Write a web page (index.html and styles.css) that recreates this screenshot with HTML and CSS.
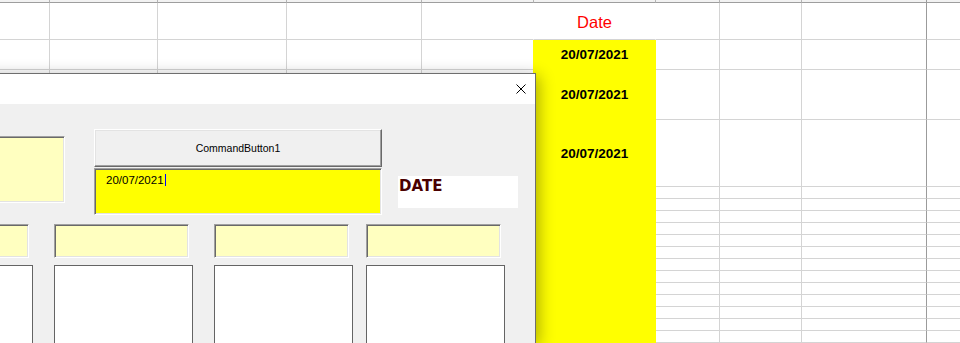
FILE: index.html
```html
<!DOCTYPE html>
<html lang="en">
<head>
    <meta charset="UTF-8">
    <meta name="viewport" content="width=device-width, initial-scale=1.0">
    <title>UserForm</title>
    <link rel="stylesheet" href="styles.css">
</head>
<body>

<!-- Worksheet behind the form -->
<div class="sheet" id="sheet"></div>

<!-- UserForm window -->
<div class="dialog">
    <div class="title-bar">
        <span class="close-btn">
            <svg width="10" height="10" viewBox="0 0 10 10">
                <path d="M0.5 0.5 L9.5 9.5 M9.5 0.5 L0.5 9.5" stroke="#000" stroke-width="1" fill="none"/>
            </svg>
        </span>
    </div>

    <div class="form-body">
        <div class="top-row">
            <div class="field field-tall"></div>
            <div class="button-stack">
                <button type="button" class="command-btn">CommandButton1</button>
                <div class="date-input">20/07/2021<span class="caret"></span></div>
            </div>
            <div class="date-label">DATE</div>
        </div>

        <div class="list-row">
            <div class="list-col">
                <div class="field"></div>
                <div class="list-box"></div>
            </div>
            <div class="list-col">
                <div class="field"></div>
                <div class="list-box"></div>
            </div>
            <div class="list-col">
                <div class="field"></div>
                <div class="list-box"></div>
            </div>
            <div class="list-col">
                <div class="field"></div>
                <div class="list-box"></div>
            </div>
        </div>
    </div>
</div>

<script>
    var rowHeights = [3, 37, 30, 50, 67];
    for (var i = 0; i < 13; i++) {
        rowHeights.push(12);
    }

    var sheet = document.getElementById('sheet');

    rowHeights.forEach(function(h, r) {
        var row = document.createElement('div');
        row.className = r === 0 ? 'row header-row' : 'row';
        row.style.height = h + 'px';

        for (var c = 0; c < 10; c++) {
            var cell = document.createElement('div');
            cell.className = 'cell';

            if (r === 1 && (c === 4 || c === 5)) {
                cell.className += ' no-right';
            }
            if (r === 1 && c === 5) {
                cell.className += ' date-head';
                cell.textContent = 'Date';
            }
            if (r > 1 && c === 5) {
                cell.className += ' yellow';
            }
            if (r >= 2 && r <= 4 && c === 5) {
                cell.textContent = '20/07/2021';
            }
            row.appendChild(cell);
        }
        sheet.appendChild(row);
    });
</script>
</body>
</html>
```

FILE: styles.css
```css
* {
    margin: 0;
    padding: 0;
    box-sizing: border-box;
}

body {
    position: relative;
    width: 960px;
    height: 343px;
    overflow: hidden;
    background-color: #fff;
    font-family: "Liberation Sans", Arial, sans-serif;
}

/* Worksheet grid */
.row {
    display: grid;
    grid-template-columns: 50px 108px 129px 135px 112px 122px 64px 82px 125px 33px;
}

.cell {
    display: flex;
    align-items: center;
    justify-content: center;
    overflow: hidden;
    border-right: 1px solid #d4d4d4;
    border-bottom: 1px solid #d4d4d4;
    font-size: 13.5px;
    font-weight: bold;
    color: #000;
}

.header-row .cell {
    background-color: #f2f2f2;
    border-bottom-color: #9e9e9e;
    border-right-color: #b4b4b4;
}

.cell:nth-child(9) {
    border-right-color: #9b9b9b;
}

.cell:last-child {
    border-right: none;
}

.cell.no-right {
    border-right-color: #fff;
}

.date-head {
    padding-top: 2px;
    font-size: 16.5px;
    font-weight: normal;
    color: #ff0000;
}

.yellow {
    background-color: #ffff00;
    border-color: #ffff00;
    box-shadow: -1px 0 0 #ffff00;
}

/* UserForm */
.dialog {
    position: absolute;
    left: -120px;
    top: 73px;
    width: 656px;
    height: 270px;
    overflow: hidden;
    background-color: #f0f0f0;
    border: 1px solid #6e6e6e;
    border-bottom: none;
    box-shadow: 3px 3px 15px rgba(0, 0, 0, 0.32);
}

.title-bar {
    height: 30px;
    background-color: #fff;
    display: flex;
    justify-content: flex-end;
    align-items: center;
    padding-right: 9px;
    padding-bottom: 1px;
}

.close-btn {
    display: flex;
    width: 10px;
    height: 10px;
}

.form-body {
    padding: 25px 0 0 13px;
}

.top-row {
    display: flex;
    align-items: flex-start;
}

.field {
    width: 135px;
    height: 34px;
    background-color: #ffffc0;
    border: 1px solid;
    border-color: #a0a0a0 #fff #fff #a0a0a0;
    box-shadow: inset 1px 1px 0 #696969, inset -1px -1px 0 #e3e3e3;
}

.field-tall {
    width: 171px;
    height: 67px;
    margin-top: 7px;
}

.button-stack {
    display: flex;
    flex-direction: column;
    width: 288px;
    margin-left: 29px;
}

.command-btn {
    height: 38px;
    background-color: #f0f0f0;
    border: 1px solid;
    border-color: #fff #696969 #696969 #fff;
    box-shadow: inset -1px -1px 0 #a0a0a0, inset 1px 1px 0 #e3e3e3;
    font-family: "Liberation Sans", Arial, sans-serif;
    font-size: 10.5px;
    color: #000;
}

.date-input {
    height: 47px;
    margin-top: 1px;
    padding: 4px 0 0 11px;
    background-color: #ffff00;
    border: 1px solid;
    border-color: #a0a0a0 #fff #fff #a0a0a0;
    box-shadow: inset 1px 1px 0 #696969, inset -1px -1px 0 #e3e3e3;
    font-size: 11.5px;
    line-height: 14px;
    color: #000;
}

.caret {
    display: inline-block;
    width: 1px;
    height: 12px;
    margin-left: 1px;
    vertical-align: -2px;
    background-color: #0000ff;
}

.date-label {
    width: 120px;
    height: 32px;
    margin: 47px 0 0 16px;
    padding: 1px 1px 0;
    background-color: #fff;
    font-family: "DejaVu Sans", sans-serif;
    font-size: 15px;
    line-height: 18px;
    font-weight: bold;
    color: #4a0000;
}

.list-row {
    display: grid;
    grid-template-columns: 160px 160px 152px 139px;
    margin-top: 9px;
}

.list-box {
    width: 139px;
    height: 100px;
    margin-top: 7px;
    background-color: #fff;
    border: 1px solid #646464;
}
```
